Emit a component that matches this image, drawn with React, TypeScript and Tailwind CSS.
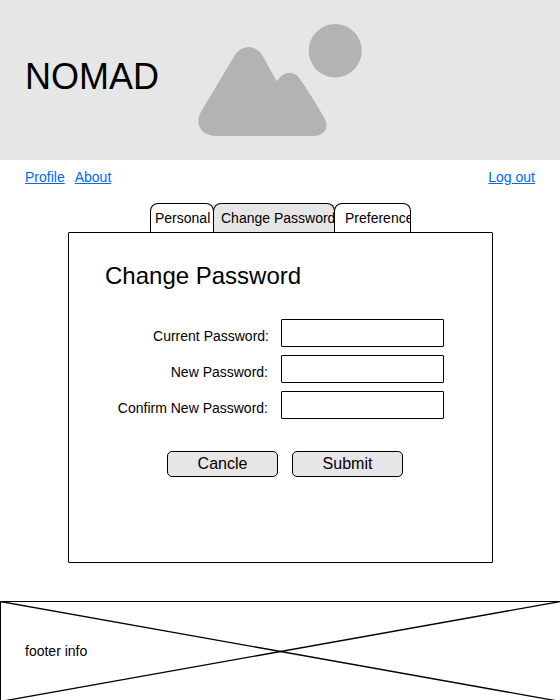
import type { ReactNode } from "react";

function Link({ children }: { children: ReactNode }) {
  return (
    <a href="#" className="text-[#006be6] underline">
      {children}
    </a>
  );
}

function Field({ label, shift = "pr-[13px]" }: { label: string; shift?: string }) {
  return (
    <label className="flex h-7">
      <span className={"w-[212px] pt-[7px] text-right leading-5 whitespace-nowrap " + shift}>{label}</span>
      <input type="password" className="h-7 w-[163px] rounded-[1px] border border-black bg-white" />
    </label>
  );
}

function Button({ children }: { children: ReactNode }) {
  return (
    <button
      type="button"
      className="h-[26px] w-[111px] rounded-[5px] border border-black bg-[#e6e6e6] text-base leading-6"
    >
      {children}
    </button>
  );
}

function Landscape() {
  return (
    <svg className="ml-10 h-40 w-[170px] shrink-0" viewBox="198 0 170 160" fill="#b3b3b3">
      <ellipse cx="335.2" cy="50.8" rx="26.5" ry="26.8" />
      <path d="M233.3 57.7C241 43.7 254.5 43.7 262.7 55.7Q268 66 277 81.3C284 70 294 70.5 300 79Q311 95 324 117.3C330 128 324.5 136 313.3 136H216C201 136 194.5 124.5 201 111.7Z" />
    </svg>
  );
}

export default function App() {
  return (
    <div className="flex h-[700px] w-[560px] flex-col overflow-hidden bg-white font-['Liberation_Sans',Arial,sans-serif] text-sm text-black">
      <header className="flex h-40 shrink-0 bg-[#e6e6e6] pl-[25px]">
        <h1 className="w-[133px] pt-[57px] text-4xl leading-10">NOMAD</h1>
        <Landscape />
      </header>
      <nav className="flex h-[43px] shrink-0 gap-[10px] px-[25px] pt-[7px] leading-5">
        <Link>Profile</Link>
        <Link>About</Link>
        <span className="ml-auto">
          <Link>Log out</Link>
        </span>
      </nav>
      <div className="ml-[150px] flex h-[29px] shrink-0 leading-[29px] whitespace-nowrap">
        <div className="w-16 overflow-hidden rounded-t-lg border border-b-0 border-black pl-1">Personal</div>
        <div className="-ml-px w-[122px] overflow-hidden rounded-t-lg border border-b-0 border-black bg-[#e6e6e6] pl-[7px]">
          Change Password
        </div>
        <div className="-ml-px w-[77px] overflow-hidden rounded-t-lg border border-b-0 border-black bg-white pl-[10px]">
          Preferences
        </div>
      </div>
      <main className="ml-[68px] h-[331px] w-[425px] shrink-0 rounded-[1px] border border-black">
        <h2 className="mt-[27px] ml-9 text-2xl leading-8">Change Password</h2>
        <form>
          <div className="mt-[27px] flex flex-col gap-2">
            <Field label="Current Password:" shift="pr-3" />
            <Field label="New Password:" />
            <Field label="Confirm New Password:" />
          </div>
          <div className="mt-8 ml-[98px] flex gap-[14px]">
            <Button>Cancle</Button>
            <Button>Submit</Button>
          </div>
        </form>
      </main>
      <footer className="relative mt-[38px] h-[99px] shrink-0">
        <svg className="absolute inset-0 h-[99px] w-[560px]" viewBox="0 0 560 99" fill="none" stroke="#000">
          <path d="M0.5 101V0.5H560" />
          <path strokeWidth="1.3" d="M0.5 0.5L560.5 100.5M0.5 100.5L560.5 0.5" />
        </svg>
        <p className="relative pt-10 pl-[25px] leading-5">footer info</p>
      </footer>
    </div>
  );
}
